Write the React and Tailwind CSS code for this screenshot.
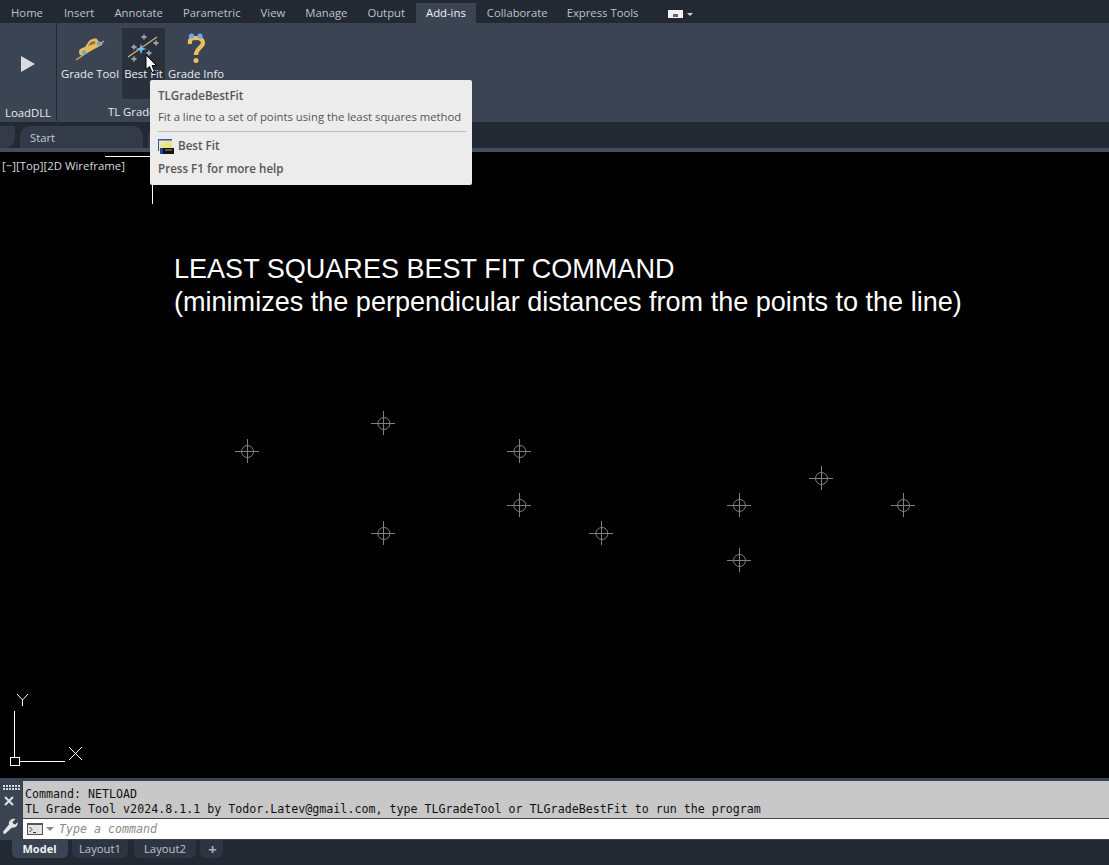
const UI = "font-['Open_Sans','Noto_Sans',sans-serif]";

const TABS = ["Home", "Insert", "Annotate", "Parametric", "View", "Manage", "Output", "Add-ins", "Collaborate", "Express Tools"];
const POINTS = [[247, 451], [383.4, 423], [519.4, 451], [519.4, 505], [383.4, 533], [601.4, 533], [739, 505], [739, 560], [821, 478], [903, 505]];

function CarIcon() {
  return (
    <svg width="32" height="32" viewBox="0 0 32 32">
      <path d="M2 29 L30 10" stroke="#d9b45f" strokeWidth="1.1" fill="none" />
      <path d="M5 21 C5 18 8 17 11 16 L15 10 C17 8 21 7 23 8 L25 11 C28 11 29 12 28 14 L26 15 L9 24 C7 25 5 24 5 21 Z" fill="#e9b95d" />
      <path d="M14 15 L17 11 L20.5 10 L21.5 12.5 Z" fill="#8a7443" />
      <circle cx="10" cy="21.5" r="2.2" fill="#5fa9dd" />
      <circle cx="25" cy="12.5" r="2.2" fill="#5fa9dd" />
    </svg>
  );
}

function BestFitIcon() {
  const dots = [[18, 6], [8, 16], [30, 12], [23, 22], [8, 28]];
  return (
    <svg width="36" height="32" viewBox="0 0 36 32">
      {dots.map(([x, y], i) => (
        <path key={i} d={`M${x - 2.5} ${y} H${x + 2.5} M${x} ${y - 2.5} V${y + 2.5}`} stroke="#9a9ea4" strokeWidth="1.8" />
      ))}
      <path d="M2 26 L31 6" stroke="#dcb871" strokeWidth="1.1" />
      <path d="M15 12.5 L16.2 16.8 L20.5 18 L16.2 19.2 L15 23.5 L13.8 19.2 L9.5 18 L13.8 16.8 Z" fill="#6cc0f4" />
    </svg>
  );
}

function InfoIcon() {
  return (
    <svg width="24" height="32" viewBox="0 0 24 32">
      <path d="M6 13 C5 7 9 7 12 7 C17 7 19 9 19 12 C19 16 12 17 12 24" stroke="#ecbd62" strokeWidth="4.2" fill="none" />
      <circle cx="12" cy="29.5" r="2.5" fill="#ecbd62" />
      <circle cx="7.5" cy="5" r="2.6" fill="#68aee4" />
      <circle cx="16" cy="5" r="2.6" fill="#68aee4" />
    </svg>
  );
}

function RibbonButton({ icon, label, className }) {
  return (
    <div className={`flex h-[71px] flex-col items-center ${className}`}>
      <div className="flex h-[35px] items-end justify-center">{icon}</div>
      <span className="mt-[3px] whitespace-nowrap text-[11.3px] leading-[16px] text-[#e8ebef]">{label}</span>
    </div>
  );
}

function Canvas() {
  return (
    <div className="relative flex-1 bg-black">
      <svg className="absolute inset-0" width="1109" height="626" viewBox="0 152 1109 626" fill="none">
        {POINTS.map(([x, y]) => (
          <g key={`${x}-${y}`} stroke="#808080">
            <path d={`M${x - 12} ${y + 0.5} H${x + 12} M${x + 0.5} ${y - 12} V${y + 12}`} shapeRendering="crispEdges" />
            <circle cx={x + 0.5} cy={y + 0.5} r="6" />
          </g>
        ))}
        <g stroke="#ffffff" shapeRendering="crispEdges">
          <path d="M105 156.5 H152 M152.5 185 V204" />
          <path d="M14.5 711 V757 M20 761.5 H65" />
          <rect x="10.5" y="757.5" width="9" height="8" />
        </g>
        <g stroke="#ffffff">
          <path d="M17 694 L22.5 700 L28 694 M22.5 700 V706" />
          <path d="M69 747 L82 760 M82 747 L69 760" />
        </g>
      </svg>
      <span className={`absolute left-[2px] top-[5px] whitespace-nowrap text-[11.4px] leading-[17px] text-[#d8dade] ${UI}`}>[−][Top][2D Wireframe]</span>
      <p className="absolute left-[174px] top-[101px] whitespace-nowrap font-['Liberation_Sans',Arial,sans-serif] text-[27.05px] leading-[33px] text-white">
        LEAST SQUARES BEST FIT COMMAND
        <br />
        (minimizes the perpendicular distances from the points to the line)
      </p>
    </div>
  );
}

function Tooltip() {
  return (
    <div className={`absolute left-[150px] top-[80px] flex h-[105px] w-[322px] flex-col rounded-[2px] bg-[#ececec] px-[8px] pt-[7px] text-[#555555] ${UI}`}>
      <div className="text-[11.6px] font-semibold leading-[17px]">TLGradeBestFit</div>
      <div className="mt-[5px] whitespace-nowrap text-[11.3px] leading-[16px]">Fit a line to a set of points using the least squares method</div>
      <div className="mr-[-2px] mt-[6px] h-px bg-[#bdbdbd]" />
      <div className="mt-[6px] flex items-center gap-[4px]">
        <svg width="16" height="16" viewBox="0 0 16 16">
          <defs>
            <linearGradient id="tipicon" x1="0" y1="0" x2="1" y2="1">
              <stop offset="0" stopColor="#f4f2c8" />
              <stop offset="1" stopColor="#e2dc58" />
            </linearGradient>
          </defs>
          <rect x="0" y="1" width="14" height="12" fill="url(#tipicon)" />
          <rect x="0" y="1" width="14" height="1.5" fill="#2f55b5" />
          <rect x="0" y="1" width="1" height="12" fill="#2f55b5" />
          <rect x="2" y="10" width="14" height="6" fill="#141414" />
          <rect x="2" y="10" width="3" height="6" fill="#2440a0" />
          <path d="M7 12 H14" stroke="#9a9a9a" />
        </svg>
        <span className="text-[11.6px] font-semibold leading-[16px]">Best Fit</span>
      </div>
      <div className="mt-[7px] text-[11.6px] font-semibold leading-[16px]">Press F1 for more help</div>
    </div>
  );
}

function Cursor() {
  return (
    <svg className="absolute left-[145px] top-[54px]" width="13" height="20" viewBox="0 0 13 20">
      <path d="M1 1 V15.5 L4.5 12.5 L7 18.5 L9.5 17.5 L7 11.5 L11.5 11.5 Z" fill="#ffffff" stroke="#000000" strokeWidth="1" />
    </svg>
  );
}

export default function App() {
  return (
    <div className={`relative flex h-[865px] w-[1109px] flex-col overflow-hidden bg-black ${UI}`}>
      <div className="flex h-[23px] items-end bg-[#222933] pl-px">
        {TABS.map((t) => (
          <div
            key={t}
            className={`flex h-[20px] items-center px-[10px] text-[11.3px] ${t === "Add-ins" ? "ml-px mr-px bg-[#3b4453] text-[#f2f3f5]" : "text-[#bcc3cc]"} ${t === "Home" ? "mr-px" : ""} ${t === "Collaborate" ? "mr-[-1px]" : ""}`}
          >
            {t}
          </div>
        ))}
        <div className="mb-[5px] ml-[20px] flex items-center gap-[4px]">
          <div className="flex h-[8px] w-[15px] items-end justify-center bg-[#f2f2f2] pb-px">
            <div className="h-[3px] w-[5px] bg-[#666666]" />
          </div>
          <div className="h-0 w-0 border-x-[3px] border-t-[3px] border-x-transparent border-t-[#cfd2d6]" />
        </div>
      </div>

      <div className="flex h-[99px] bg-[#3b4453]">
        <div className="flex h-[98px] w-[57px] flex-col items-center border-r border-[#222933]">
          <div className="flex h-[82px] items-center justify-center pr-[1px]">
            <svg width="14" height="16" viewBox="0 0 14 16">
              <path d="M0 0 L14 8 L0 16 Z" fill="#d9dbdf" />
            </svg>
          </div>
          <span className="text-[11.3px] leading-[16px] text-[#e8ebef]">LoadDLL</span>
        </div>
        <div className="flex w-[173px] flex-col">
          <div className="box-content flex h-[71px] items-start pt-[5px] pl-[3px]">
            <RibbonButton icon={<CarIcon />} label="Grade Tool" className="w-[60px]" />
            <RibbonButton icon={<BestFitIcon />} label="Best Fit" className="ml-[2px] w-[43px] bg-[#2a313d]" />
            <RibbonButton icon={<InfoIcon />} label="Grade Info" className="ml-[1px] w-[60px]" />
          </div>
          <span className="mt-[5px] pl-[51px] text-[11.3px] leading-[16px] text-[#e8ebef]">TL Grade Tool</span>
        </div>
      </div>

      <div className="flex h-[26px] items-end gap-[5px] bg-[#222933]">
        <div className="h-[22px] w-[15px] rounded-br-[10px] bg-[#333b49]" />
        <div className="flex h-[22px] w-[123px] items-center rounded-t-[10px] bg-[#333b49] pl-[10px] pt-[2px] text-[11.3px] text-[#c5cad1]">Start</div>
        <div className="h-[22px] w-[20px] rounded-t-[10px] bg-[#333b49]" />
      </div>
      <div className="h-[4px] bg-[#444d5e]" />

      <Canvas />

      <div className="flex h-[62px] bg-[#3b4453]">
        <div className="flex w-[23px] flex-col items-center pt-[7px]">
          <div className="grid grid-cols-6 gap-px">
            {Array.from({ length: 12 }).map((_, i) => (
              <div key={i} className="h-[2px] w-[2px] bg-[#d5d8dc]" />
            ))}
          </div>
          <svg className="mr-[5px] mt-[6px]" width="10" height="10" viewBox="0 0 10 10">
            <path d="M1 1 L9 9 M9 1 L1 9" stroke="#dfe1e4" strokeWidth="2" />
          </svg>
          <svg className="mr-[3px] mt-[12px]" width="16" height="16" viewBox="0 0 16 16">
            <path d="M13.5 1 L10.5 4 L11.5 6 L13.5 6.5 L15.5 4 C16.5 7.5 13.5 10.5 10 9.5 L3.5 15.5 C2 16.5 0.5 15 1.5 13 L7 6.5 C6 3.5 9.5 0 13.5 1 Z" fill="#e5e6e8" />
          </svg>
        </div>
        <div className="flex flex-1 flex-col pt-[3px]">
          <div className="h-[37px] bg-[#c8c8c8] pl-[2px] pt-[6px] font-['DejaVu_Sans_Mono',monospace] text-[11.65px] leading-[15px] text-[#111111]">
            <div className="whitespace-nowrap">Command: NETLOAD</div>
            <div className="whitespace-nowrap">TL Grade Tool v2024.8.1.1 by Todor.Latev@gmail.com, type TLGradeTool or TLGradeBestFit to run the program</div>
          </div>
          <div className="mt-px flex h-[20px] items-center gap-[3px] bg-white pl-[4px]">
            <svg width="16" height="12" viewBox="0 0 16 12">
              <rect x="0.5" y="0.5" width="15" height="11" fill="#e4e4e4" stroke="#555555" />
              <rect x="0.5" y="0.5" width="15" height="1.5" fill="#555555" />
              <path d="M2.5 4 L5 6.5 L2.5 9 M6 9.5 H9" stroke="#333333" fill="none" />
            </svg>
            <div className="h-0 w-0 border-x-[4px] border-t-[4px] border-x-transparent border-t-[#8a8a8a]" />
            <span className="ml-[2px] font-['DejaVu_Sans_Mono',monospace] text-[11.65px] italic leading-[15px] text-[#8a8a8a]">Type a command</span>
          </div>
        </div>
      </div>

      <div className="flex h-[25px] items-start bg-[#222933] pl-[12px]">
        <div className="flex h-[18px] w-[56px] items-center justify-center rounded-b-[6px] bg-[#3b4453] pr-px text-[11px] font-bold text-[#eef0f2]">Model</div>
        <div className="ml-[4px] flex h-[18px] w-[56px] items-center justify-center rounded-b-[6px] bg-[#2d3542] text-[11.3px] text-[#bcc3cc]">Layout1</div>
        <div className="ml-[6px] flex h-[18px] w-[62px] items-center justify-center rounded-b-[6px] bg-[#2d3542] text-[11.3px] text-[#bcc3cc]">Layout2</div>
        <div className="ml-[4px] flex h-[18px] w-[23px] items-center justify-center rounded-b-[6px] bg-[#2d3542] pl-[2px] text-[15px] font-bold leading-none text-[#a9afb8]">+</div>
      </div>

      <Tooltip />
      <Cursor />
    </div>
  );
}
